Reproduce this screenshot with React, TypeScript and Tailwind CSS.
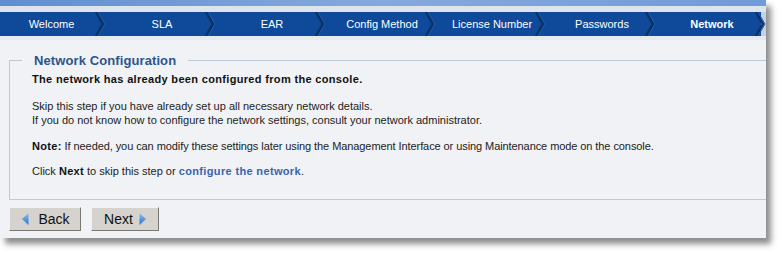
import React from 'react'

const steps = ['Welcome', 'SLA', 'EAR', 'Config Method', 'License Number', 'Passwords', 'Network']

function Chevron() {
  return (
    <svg width="12" height="24" viewBox="0 0 12 24" className="absolute right-[-6px] top-0">
      <polyline points="1,0 8,12 1,24" fill="none" stroke="#0a326a" strokeWidth="2.5" />
      <polyline points="3,0 10,12 3,24" fill="none" stroke="#24599c" strokeWidth="1" />
    </svg>
  )
}

function Triangle({ dir }: { dir: 'left' | 'right' }) {
  return (
    <svg width="7" height="12" viewBox="0 0 7 12">
      <defs>
        <linearGradient id={`tri-${dir}`} x1="0" y1="0" x2="0" y2="1">
          <stop offset="0" stopColor="#8fc0f4" />
          <stop offset="1" stopColor="#2a6fd0" />
        </linearGradient>
      </defs>
      {dir === 'left' ? (
        <polygon points="6.5,0 0,6 6.5,12" fill={`url(#tri-${dir})`} />
      ) : (
        <polygon points="0.5,0 7,6 0.5,12" fill={`url(#tri-${dir})`} />
      )}
    </svg>
  )
}

export default function App() {
  return (
    <div className="w-[782px] h-[254px] bg-white" style={{ fontFamily: '"Liberation Sans", Arial, sans-serif' }}>
      <div className="w-[766px] h-[238px] bg-[#f0f2f5] overflow-hidden shadow-[5px_6px_6px_rgba(0,0,0,0.45)] flex flex-col">
        {/* header */}
        <div className="h-[6px] bg-gradient-to-r from-[#5f8fd0] via-[#86a9dc] to-[#6f9bd8]" />
        <div className="h-[6px] bg-[#dde4ee]" />
        <div className="h-[24px] bg-[#0e4a99] flex">
          {steps.map((s, i) => (
            <div
              key={s}
              className={`relative shrink-0 flex items-center justify-center text-[11px] text-white ${i === 0 ? 'w-[101px] pl-[2px]' : 'w-[110px] pl-[12px]'} ${s === 'Network' ? 'font-bold' : ''}`}
            >
              {s}
              <Chevron />
            </div>
          ))}
          <div className="flex-1 bg-[#c3d3e6]" />
        </div>
        <div className="h-[4px] bg-[#e6eaf0]" />

        {/* content */}
        <div className="flex-1 pt-[13px]">
          <fieldset className="ml-[9px] border border-r-0 border-[#b9cadb] pl-[22px] pb-[21px]">
            <legend className="-ml-[10px] px-[12px] text-[13px] font-bold text-[#2e548d] leading-[15px] tracking-[0.1px]">
              Network Configuration
            </legend>
            <div className="text-[11px] leading-[14px] text-[#222]">
              <p className="mt-[4px] font-bold text-[#111] tracking-[0.33px]">The network has already been configured from the console.</p>
              <p className="mt-[13px]">
                Skip this step if you have already set up all necessary network details.
                <br />
                If you do not know how to configure the network settings, consult your network administrator.
              </p>
              <p className="mt-[12px] tracking-[-0.08px]">
                <span className="font-bold text-[#111] tracking-[0.3px]">Note:</span> If needed, you can modify these settings later using the Management Interface or using Maintenance mode on the console.
              </p>
              <p className="mt-[11px]">
                Click <span className="font-bold text-[#111] tracking-[0.3px]">Next</span> to skip this step or{' '}
                <span className="font-bold text-[#3a64ae] tracking-[0.35px]">configure the network</span>.
              </p>
            </div>
          </fieldset>

          <div className="flex gap-[10px] ml-[9px] mt-[7px]">
            <button className="w-[72px] h-[24px] bg-[#d6d3ce] border border-t-[#f4f3f0] border-l-[#f4f3f0] border-b-[#7a7874] border-r-[#7a7874] flex items-center justify-center gap-[9px] pl-[2px] text-[14px] text-[#111]">
              <Triangle dir="left" />
              Back
            </button>
            <button className="w-[68px] h-[24px] bg-[#d6d3ce] border border-t-[#f4f3f0] border-l-[#f4f3f0] border-b-[#7a7874] border-r-[#7a7874] flex items-center justify-center gap-[6px] text-[14px] text-[#111]">
              Next
              <Triangle dir="right" />
            </button>
          </div>
        </div>
      </div>
    </div>
  )
}
